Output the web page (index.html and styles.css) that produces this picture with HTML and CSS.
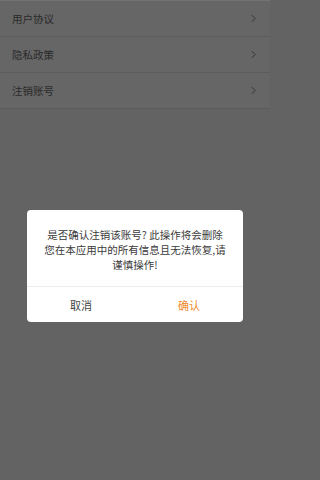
FILE: index.html
```html
<!DOCTYPE html>
<html lang="zh">
<head>
<meta charset="utf-8">
<link rel="stylesheet" href="styles.css">
</head>
<body>
<div class="page">
  <ul class="list">
    <li class="row"><span>用户协议</span><svg class="chev" viewBox="0 0 6 10"><path d="M1 1 L5 5 L1 9" fill="none" stroke="currentColor" stroke-width="1.2"/></svg></li>
    <li class="row"><span>隐私政策</span><svg class="chev" viewBox="0 0 6 10"><path d="M1 1 L5 5 L1 9" fill="none" stroke="currentColor" stroke-width="1.2"/></svg></li>
    <li class="row"><span>注销账号</span><svg class="chev" viewBox="0 0 6 10"><path d="M1 1 L5 5 L1 9" fill="none" stroke="currentColor" stroke-width="1.2"/></svg></li>
  </ul>
</div>
<div class="mask">
  <div class="dialog">
    <p class="msg">是否确认注销该账号? 此操作将会删除您在本应用中的所有信息且无法恢复,请谨慎操作!</p>
    <div class="actions">
      <button class="btn cancel">取消</button>
      <button class="btn ok">确认</button>
    </div>
  </div>
</div>
</body>
</html>
```
FILE: styles.css
```css
html {
  background: #636363;
}
html, body {
  margin: 0;
  padding: 0;
  width: 270px;
  height: 480px;
  overflow: hidden;
  font-family: "Noto Sans CJK SC", "Noto Sans", sans-serif;
}
body {
  background: #636363;
  position: relative;
}
.page {
  border-top: 1px solid #727272;
}
.list {
  list-style: none;
  margin: 0;
  padding: 0;
  background: #666666;
}
.row {
  height: 35px;
  border-bottom: 1px solid #5c5c5c;
  display: flex;
  align-items: center;
  justify-content: space-between;
  padding: 0 12px;
  font-size: 10.5px;
  color: #2a2a2a;
}
.chev {
  width: 5px;
  height: 9px;
  color: #333;
  margin-right: 2px;
}
.mask {
  position: absolute;
  inset: 0;
  display: flex;
  justify-content: center;
  padding-top: 210px;
}
.dialog {
  width: 216px;
  height: 112px;
  background: #ffffff;
  border-radius: 4px;
  display: flex;
  flex-direction: column;
}
.msg {
  margin: 0;
  padding: 17px 16px 0;
  height: 59px;
  font-size: 10.5px;
  line-height: 15px;
  color: #3a3a3a;
  text-align: center;
}
.actions {
  border-top: 1px solid #ececec;
  display: flex;
  flex: 1;
}
.btn {
  flex: 1;
  border: 0;
  background: none;
  font-family: inherit;
  font-size: 11px;
  padding: 0;
  color: #444;
}
.btn.ok {
  color: #f08a2c;
}
```
